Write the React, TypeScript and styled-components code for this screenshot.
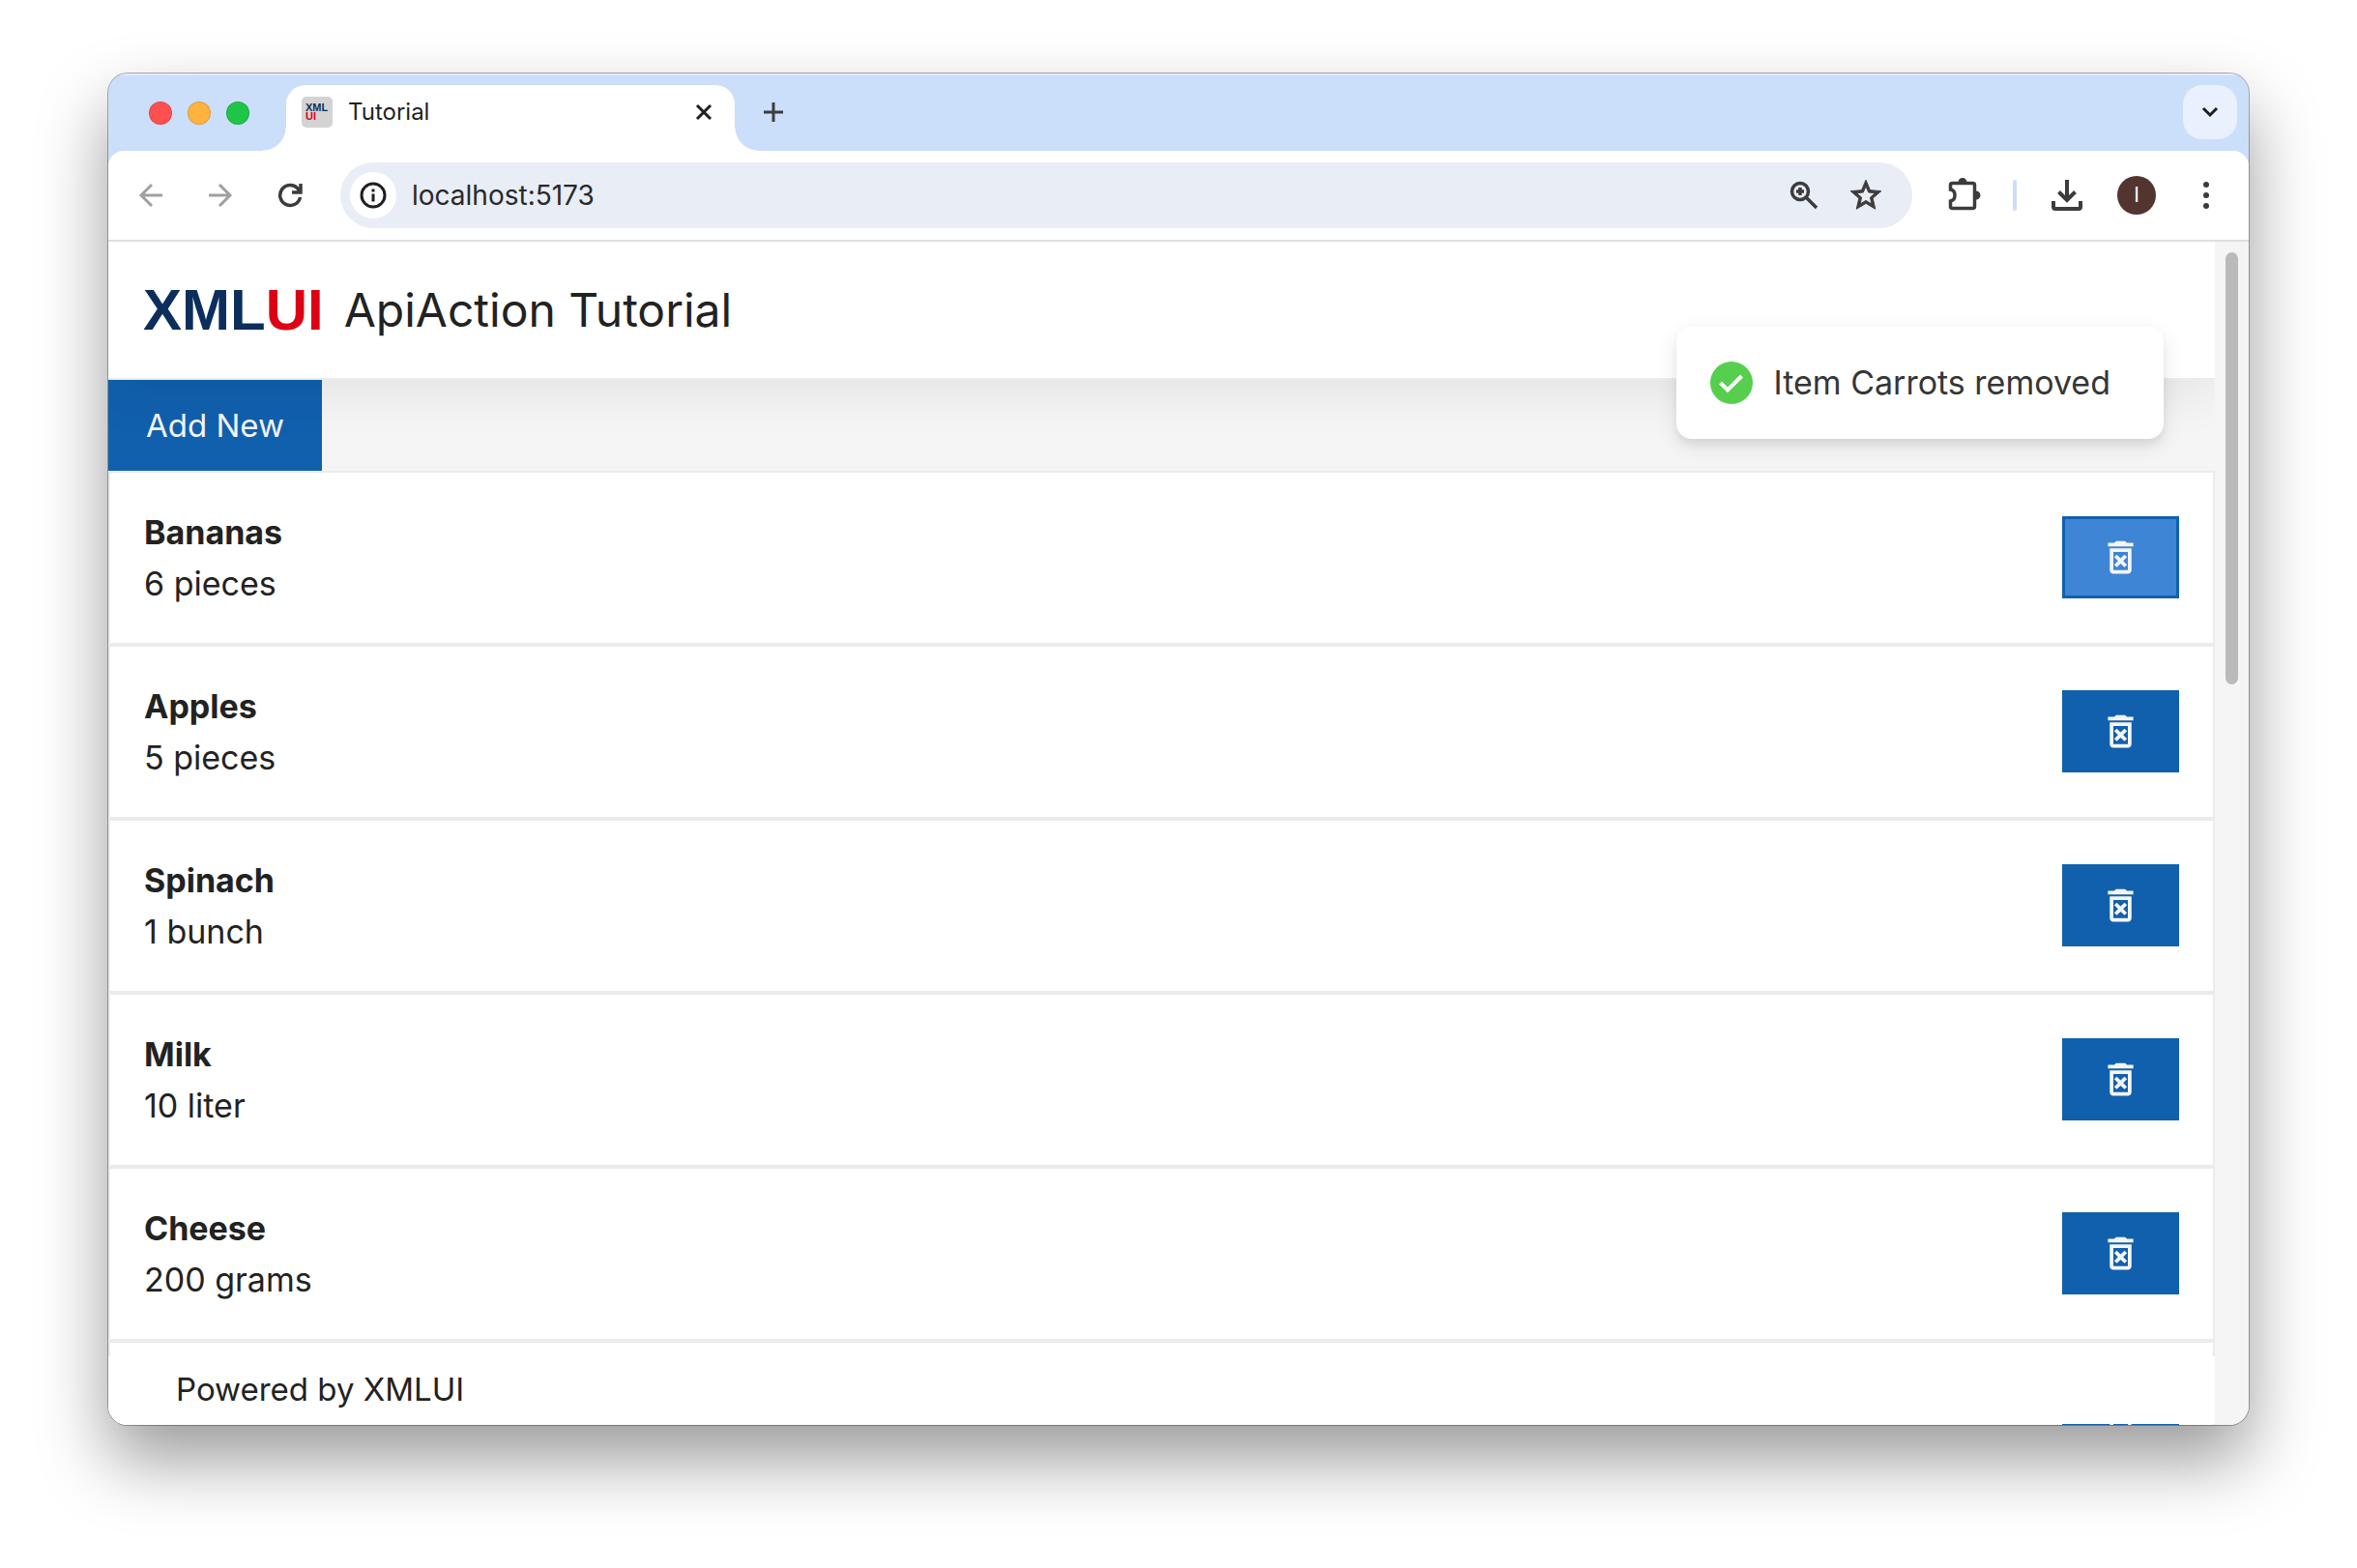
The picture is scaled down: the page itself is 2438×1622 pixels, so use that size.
import React from "react";
import styled, { createGlobalStyle } from "styled-components";

const sans = `Inter, "Liberation Sans", sans-serif`;

const GlobalStyle = createGlobalStyle`
  *, *::before, *::after { box-sizing: border-box; }
  body { margin: 0; background: #fff; color: #222; font-family: ${sans}; }
  button, input { font-family: inherit; margin: 0; }
`;

const Desktop = styled.div`
  display: flex;
  height: 100vh;
  padding: 76px 112px 148px;
  overflow: hidden;
`;

const BrowserWindow = styled.div`
  flex: 1;
  min-width: 0;
  display: flex;
  flex-direction: column;
  border-radius: 20px;
  overflow: hidden;
  background: #cbdefa;
  box-shadow: 0 0 0 1px rgba(0, 0, 0, 0.3), 0 36px 72px rgba(0, 0, 0, 0.4);
`;

const TabStrip = styled.div`
  display: flex;
  align-items: flex-start;
  height: 80px;
  padding: 12px 12px 0 42px;
  box-shadow: inset 0 2px 0 #dfebfc;
`;

const Lights = styled.div`
  display: flex;
  align-items: center;
  gap: 16px;
  height: 58px;
  margin-right: 38px;
`;

const Light = styled.button<{ $color: string }>`
  width: 24px;
  height: 24px;
  padding: 0;
  border: 1px solid rgba(0, 0, 0, 0.12);
  border-radius: 50%;
  background: ${(p) => p.$color};
`;

const Tab = styled.div`
  position: relative;
  display: flex;
  align-items: center;
  width: 464px;
  height: 68px;
  padding: 0 20px 12px 16px;
  border-radius: 20px 20px 0 0;
  background: #fff;

  &::before,
  &::after {
    content: "";
    position: absolute;
    bottom: 0;
    width: 24px;
    height: 24px;
  }
  &::before {
    right: 100%;
    background: radial-gradient(circle at 0 0, transparent 23px, #fff 24px);
  }
  &::after {
    left: 100%;
    background: radial-gradient(circle at 100% 0, transparent 23px, #fff 24px);
  }
`;

const Favicon = styled.span`
  display: flex;
  flex-direction: column;
  justify-content: center;
  width: 32px;
  height: 32px;
  padding-left: 4px;
  border-radius: 5px;
  background: #d3d3d3;
  color: #0c2e5c;
  font: bold 11px/9px "Liberation Sans", sans-serif;
`;

const Red = styled.span`
  color: #dc0014;
`;

const TabTitle = styled.span`
  flex: 1;
  padding-left: 16px;
  color: #1f1f1f;
  font-size: 24px;
  line-height: 32px;
`;

const IconButton = styled.button<{ $size?: number; $bg?: string; $radius?: number; $color?: string }>`
  display: grid;
  place-items: center;
  flex: none;
  width: ${(p) => p.$size ?? 56}px;
  height: ${(p) => p.$size ?? 56}px;
  padding: 0;
  border: 0;
  border-radius: ${(p) => p.$radius ?? 28}px;
  background: ${(p) => p.$bg ?? "transparent"};
  color: ${(p) => p.$color ?? "#3c3c3c"};
`;

const NewTab = styled.div`
  flex: 1;
  padding-left: 12px;
`;

const Toolbar = styled.div`
  display: flex;
  align-items: center;
  height: 94px;
  padding: 0 16px;
  border-radius: 16px 16px 0 0;
  border-bottom: 2px solid #dedede;
  background: #fff;
`;

const NavButtons = styled.div`
  display: flex;
  gap: 16px;
  margin-right: 24px;
`;

const AddressBar = styled.label`
  display: flex;
  align-items: center;
  flex: 1;
  min-width: 0;
  height: 68px;
  padding: 0 20px 0 10px;
  border-radius: 34px;
  background: #e8edf6;
`;

const AddressInput = styled.input`
  flex: 1;
  min-width: 0;
  padding: 0 16px;
  border: 0;
  outline: 0;
  background: transparent;
  color: #28292b;
  font-size: 28px;
  line-height: 36px;
`;

const AddressActions = styled.div`
  display: flex;
  gap: 8px;
`;

const Tools = styled.div`
  display: flex;
  align-items: center;
  margin-left: 26px;
`;

const ToolDivider = styled.span`
  width: 4px;
  height: 32px;
  margin: 0 24px 0 22px;
  border-radius: 2px;
  background: #cbdefa;
`;

const Avatar = styled.button`
  width: 40px;
  height: 40px;
  margin: 0 24px;
  padding: 0;
  border: 0;
  border-radius: 50%;
  background: #533530;
  color: #fff;
  font-size: 21px;
  line-height: 40px;
`;

const Viewport = styled.div`
  position: relative;
  flex: 1;
  min-height: 0;
  display: flex;
  overflow: hidden;
  background: #f5f5f5;
`;

const Page = styled.main`
  flex: 1;
  min-width: 0;
  overflow: hidden;
`;

const Header = styled.header`
  position: relative;
  display: flex;
  align-items: center;
  gap: 21px;
  height: 143px;
  padding: 0 36px;
  border-bottom: 2px solid #ebebeb;
  background: #fff;
  box-shadow: 0 18px 50px rgba(0, 0, 0, 0.065);
`;

const Logo = styled.span`
  color: #0c2e5c;
  font: bold 60px/68px "Liberation Sans", sans-serif;
`;

const Title = styled.h1`
  margin: 0;
  font-size: 48px;
  font-weight: 400;
  line-height: 64px;
`;

const AddButton = styled.button`
  display: block;
  height: 94px;
  padding: 0 39px;
  border: 0;
  background: #1160ae;
  color: #f5f5f5;
  font-size: 33px;
  line-height: 53px;
`;

const List = styled.ul`
  margin: 0;
  padding: 0;
  list-style: none;
`;

const Row = styled.li`
  display: flex;
  align-items: center;
  justify-content: space-between;
  min-height: 180px;
  padding: 0 35px;
  border: 2px solid #ebebeb;
  background: #fff;
`;

const ItemText = styled.div`
  font-size: 34px;
  line-height: 53px;
`;

const ItemName = styled.div`
  font-weight: 700;
`;

const RemoveButton = styled.button<{ $active?: boolean }>`
  display: grid;
  place-items: center;
  width: 121px;
  height: 85px;
  margin-bottom: 1px;
  padding: 0;
  border: 3px solid #1160ae;
  background: ${(p) => (p.$active ? "#3f85d6" : "#1160ae")};
  color: #f5f5f5;
`;

const Footer = styled.footer`
  position: absolute;
  left: 0;
  right: 35px;
  bottom: 1px;
  padding: 8px 70px 9px;
  background: #fff;
  font-size: 33px;
  line-height: 53px;
`;

const ScrollTrack = styled.div`
  flex: none;
  width: 35px;
  padding: 11px;
`;

const ScrollThumb = styled.div`
  width: 13px;
  height: 447px;
  border-radius: 7px;
  background: #bababa;
`;

const Toast = styled.div`
  position: absolute;
  top: 88px;
  right: 88px;
  display: flex;
  align-items: center;
  gap: 22px;
  height: 116px;
  padding: 0 55px 0 35px;
  border-radius: 16px;
  background: #fff;
  color: #363636;
  font-size: 34px;
  line-height: 46px;
  box-shadow: 0 7px 22px rgba(0, 0, 0, 0.1), 0 7px 7px rgba(0, 0, 0, 0.05);
`;

type StrokeIconProps = { size: number; width?: number; d: string; children?: React.ReactNode };

const StrokeIcon = ({ size, width = 3, d, children }: StrokeIconProps) => (
  <svg width={size} height={size} viewBox={`0 0 ${size} ${size}`} fill="none" stroke="currentColor" strokeWidth={width} aria-hidden="true">
    <path d={d} />
    {children}
  </svg>
);

const InfoIcon = () => (
  <svg width="28" height="28" viewBox="0 0 28 28" fill="none" stroke="currentColor" strokeWidth="3" aria-hidden="true">
    <circle cx="14" cy="14" r="12" />
    <path d="M14 12.5v8M14 7.5v3" />
  </svg>
);

const ZoomIcon = () => (
  <StrokeIcon size={30} width={3.5} d="M17.5 17.5 28 28M11 7v8M7 11h8">
    <circle cx="11" cy="11" r="8.500" />
  </StrokeIcon>
);

const StarIcon = () => (
  <svg width="38" height="38" viewBox="0 0 24 24" fill="currentColor" stroke="currentColor" strokeWidth="0.6" aria-hidden="true">
    <path d="m22 9.24-7.19-.62L12 2 9.19 8.63 2 9.24l5.46 4.73L5.82 21 12 17.27 18.18 21l-1.63-7.03L22 9.24zM12 15.4l-3.76 2.27 1-4.28-3.32-2.88 4.38-.38L12 6.1l1.71 4.04 4.38.38-3.32 2.88 1 4.28L12 15.4z" />
  </svg>
);

const PuzzleIcon = () => (
  <svg width="36" height="36" viewBox="0 0 36 36" aria-hidden="true">
    <path d="M3.5 7.5q0-2 2-2h21q2 0 2 2v22q0 2-2 2h-21q-2 0-2-2V24c6-1 6-11 0-12z" fill="none" stroke="currentColor" strokeWidth="3.5" />
    <path d="M11.500 4.500a4.500 4.500 0 0 1 9 0zM30 13.500a4.500 4.500 0 0 1 0 9z" fill="currentColor" />
  </svg>
);

const DotsIcon = () => (
  <svg width="8" height="30" viewBox="0 0 8 30" fill="currentColor" aria-hidden="true">
    <circle cx="4" cy="4" r="3" />
    <circle cx="4" cy="15" r="3" />
    <circle cx="4" cy="26" r="3" />
  </svg>
);

const CheckIcon = () => (
  <svg width="44" height="44" viewBox="0 0 44 44" aria-hidden="true">
    <circle cx="22" cy="22" r="22" fill="#56cf4f" />
    <path d="m10.500 22 7.500 7.500L32.500 15" fill="none" stroke="#fff" strokeWidth="4" />
  </svg>
);

const TrashIcon = () => (
  <svg width="45" height="45" viewBox="0 0 24 24" fill="currentColor" aria-hidden="true">
    <path d="M14.120 10.470 12 12.590l-2.130-2.120-1.410 1.410L10.590 14l-2.120 2.120 1.410 1.410L12 15.410l2.120 2.120 1.410-1.410L13.410 14l2.120-2.120zM15.500 4l-1-1h-5l-1 1H5v2h14V4zM6 19c0 1.100.9 2 2 2h8c1.100 0 2-.9 2-2V7H6v12zM8 9h8v10H8V9z" />
  </svg>
);

const items = [
  { name: "Bananas", quantity: "6 pieces" },
  { name: "Apples", quantity: "5 pieces" },
  { name: "Spinach", quantity: "1 bunch" },
  { name: "Milk", quantity: "10 liter" },
  { name: "Cheese", quantity: "200 grams" },
  { name: "", quantity: "" },
];

export default function App() {
  return (
    <>
      <GlobalStyle />
      <Desktop>
        <BrowserWindow>
          <TabStrip>
            <Lights>
              <Light $color="#ff5050" aria-label="Close window" />
              <Light $color="#ffb33e" aria-label="Minimize window" />
              <Light $color="#1fc549" aria-label="Zoom window" />
            </Lights>
            <Tab>
              <Favicon>
                <span>XML</span>
                <Red>UI</Red>
              </Favicon>
              <TabTitle>Tutorial</TabTitle>
              <IconButton $size={24} $color="#1f1f1f" aria-label="Close tab">
                <StrokeIcon size={18} d="M2 2 16 16M16 2 2 16" />
              </IconButton>
            </Tab>
            <NewTab>
              <IconButton aria-label="New tab">
                <StrokeIcon size={20} d="M10 0v20M0 10h20" />
              </IconButton>
            </NewTab>
            <IconButton $bg="#e9f0fe" $radius={20} $color="#1f1f1f" aria-label="Search tabs">
              <StrokeIcon size={20} d="M3 6l7 7 7-7" />
            </IconButton>
          </TabStrip>
          <Toolbar>
            <NavButtons>
              <IconButton $color="#a0a0a0" aria-label="Back">
                <StrokeIcon size={26} d="M25 13H3M14 2 3 13l11 11" />
              </IconButton>
              <IconButton $color="#a0a0a0" aria-label="Forward">
                <StrokeIcon size={26} d="M1 13h22M12 2l11 11-11 11" />
              </IconButton>
              <IconButton aria-label="Reload">
                <StrokeIcon size={26} width={3.5} d="M23.500 15A10.500 10.500 0 1 1 21 6l2 3M24 1v9h-9" />
              </IconButton>
            </NavButtons>
            <AddressBar>
              <IconButton as="span" $size={48} $bg="#fff" $color="#1f1f1f">
                <InfoIcon />
              </IconButton>
              <AddressInput aria-label="Address" defaultValue="localhost:5173" />
              <AddressActions>
                <IconButton aria-label="Zoom">
                  <ZoomIcon />
                </IconButton>
                <IconButton aria-label="Bookmark">
                  <StarIcon />
                </IconButton>
              </AddressActions>
            </AddressBar>
            <Tools>
              <IconButton aria-label="Extensions">
                <PuzzleIcon />
              </IconButton>
              <ToolDivider />
              <IconButton aria-label="Downloads">
                <StrokeIcon size={36} width={4} d="M18 2v22M9.500 14.500 18 23l8.500-8.500M4 24v6q0 2 2 2h24q2 0 2-2v-6" />
              </IconButton>
              <Avatar aria-label="Profile">I</Avatar>
              <IconButton aria-label="Menu">
                <DotsIcon />
              </IconButton>
            </Tools>
          </Toolbar>
          <Viewport>
            <Page>
              <Header>
                <Logo>
                  XML<Red>UI</Red>
                </Logo>
                <Title>ApiAction Tutorial</Title>
              </Header>
              <AddButton>Add New</AddButton>
              <List>
                {items.map((item, index) => (
                  <Row key={index}>
                    <ItemText>
                      <ItemName>{item.name}</ItemName>
                      <div>{item.quantity}</div>
                    </ItemText>
                    <RemoveButton $active={index === 0} aria-label="Remove item">
                      <TrashIcon />
                    </RemoveButton>
                  </Row>
                ))}
              </List>
            </Page>
            <ScrollTrack>
              <ScrollThumb />
            </ScrollTrack>
            <Footer>Powered by XMLUI</Footer>
            <Toast role="status">
              <CheckIcon />
              Item Carrots removed
            </Toast>
          </Viewport>
        </BrowserWindow>
      </Desktop>
    </>
  );
}
